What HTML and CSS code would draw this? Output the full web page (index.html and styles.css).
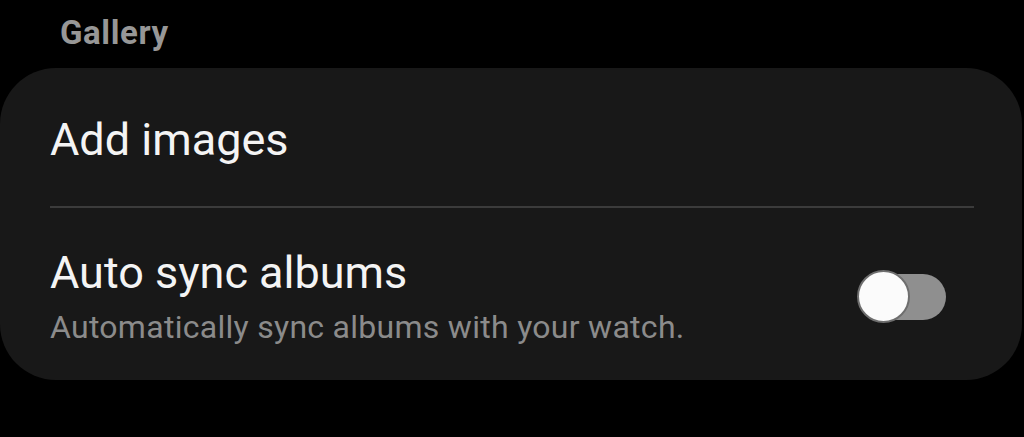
FILE: index.html
```html
<!DOCTYPE html>
<html lang="en">
<head>
<meta charset="utf-8">
<title>Gallery settings</title>
<link rel="stylesheet" href="styles.css">
</head>
<body>
  <div class="section-header">Gallery</div>
  <div class="card">
    <div class="row row-single">
      <div class="row-title">Add images</div>
    </div>
    <div class="divider"></div>
    <div class="row row-double">
      <div class="row-text">
        <div class="row-title">Auto sync albums</div>
        <div class="row-subtitle">Automatically sync albums with your watch.</div>
      </div>
      <div class="toggle">
        <div class="toggle-track"></div>
        <div class="toggle-thumb"></div>
      </div>
    </div>
  </div>
</body>
</html>
```

FILE: styles.css
```css
html, body {
  margin: 0;
  padding: 0;
  background: #000;
  font-family: Roboto, "Noto Sans", "Liberation Sans", sans-serif;
}

.section-header {
  padding: 13px 0 15px 60px;
  font-size: 33px;
  line-height: 40px;
  font-weight: 700;
  letter-spacing: 0.6px;
  color: #979797;
}

.card {
  width: 1022px;
  background: #181818;
  border-radius: 56px;
  display: flex;
  flex-direction: column;
}

.row {
  display: flex;
  align-items: center;
  padding-left: 50px;
}

.row-single {
  padding-top: 45px;
  padding-bottom: 39px;
}

.row-double {
  padding-top: 38px;
  padding-bottom: 33px;
  padding-right: 76px;
  justify-content: space-between;
}

.row-title {
  font-size: 45px;
  line-height: 54px;
  color: #f4f4f4;
}

.row-subtitle {
  margin-top: 7px;
  font-size: 32px;
  line-height: 40px;
  letter-spacing: 0.28px;
  color: #8b8b8b;
}

.divider {
  height: 2px;
  margin: 0 48px 0 50px;
  background: #3b3b3b;
}

.toggle {
  position: relative;
  width: 89px;
  height: 55px;
  flex-shrink: 0;
}

.toggle-track {
  position: absolute;
  right: 0;
  top: 5px;
  width: 76px;
  height: 46px;
  border-radius: 23px;
  background: #8f8f8f;
}

.toggle-thumb {
  position: absolute;
  left: 0;
  top: 1px;
  width: 49px;
  height: 49px;
  border-radius: 50%;
  background: #fbfbfb;
  border: 2px solid #6e6e6e;
}
```
